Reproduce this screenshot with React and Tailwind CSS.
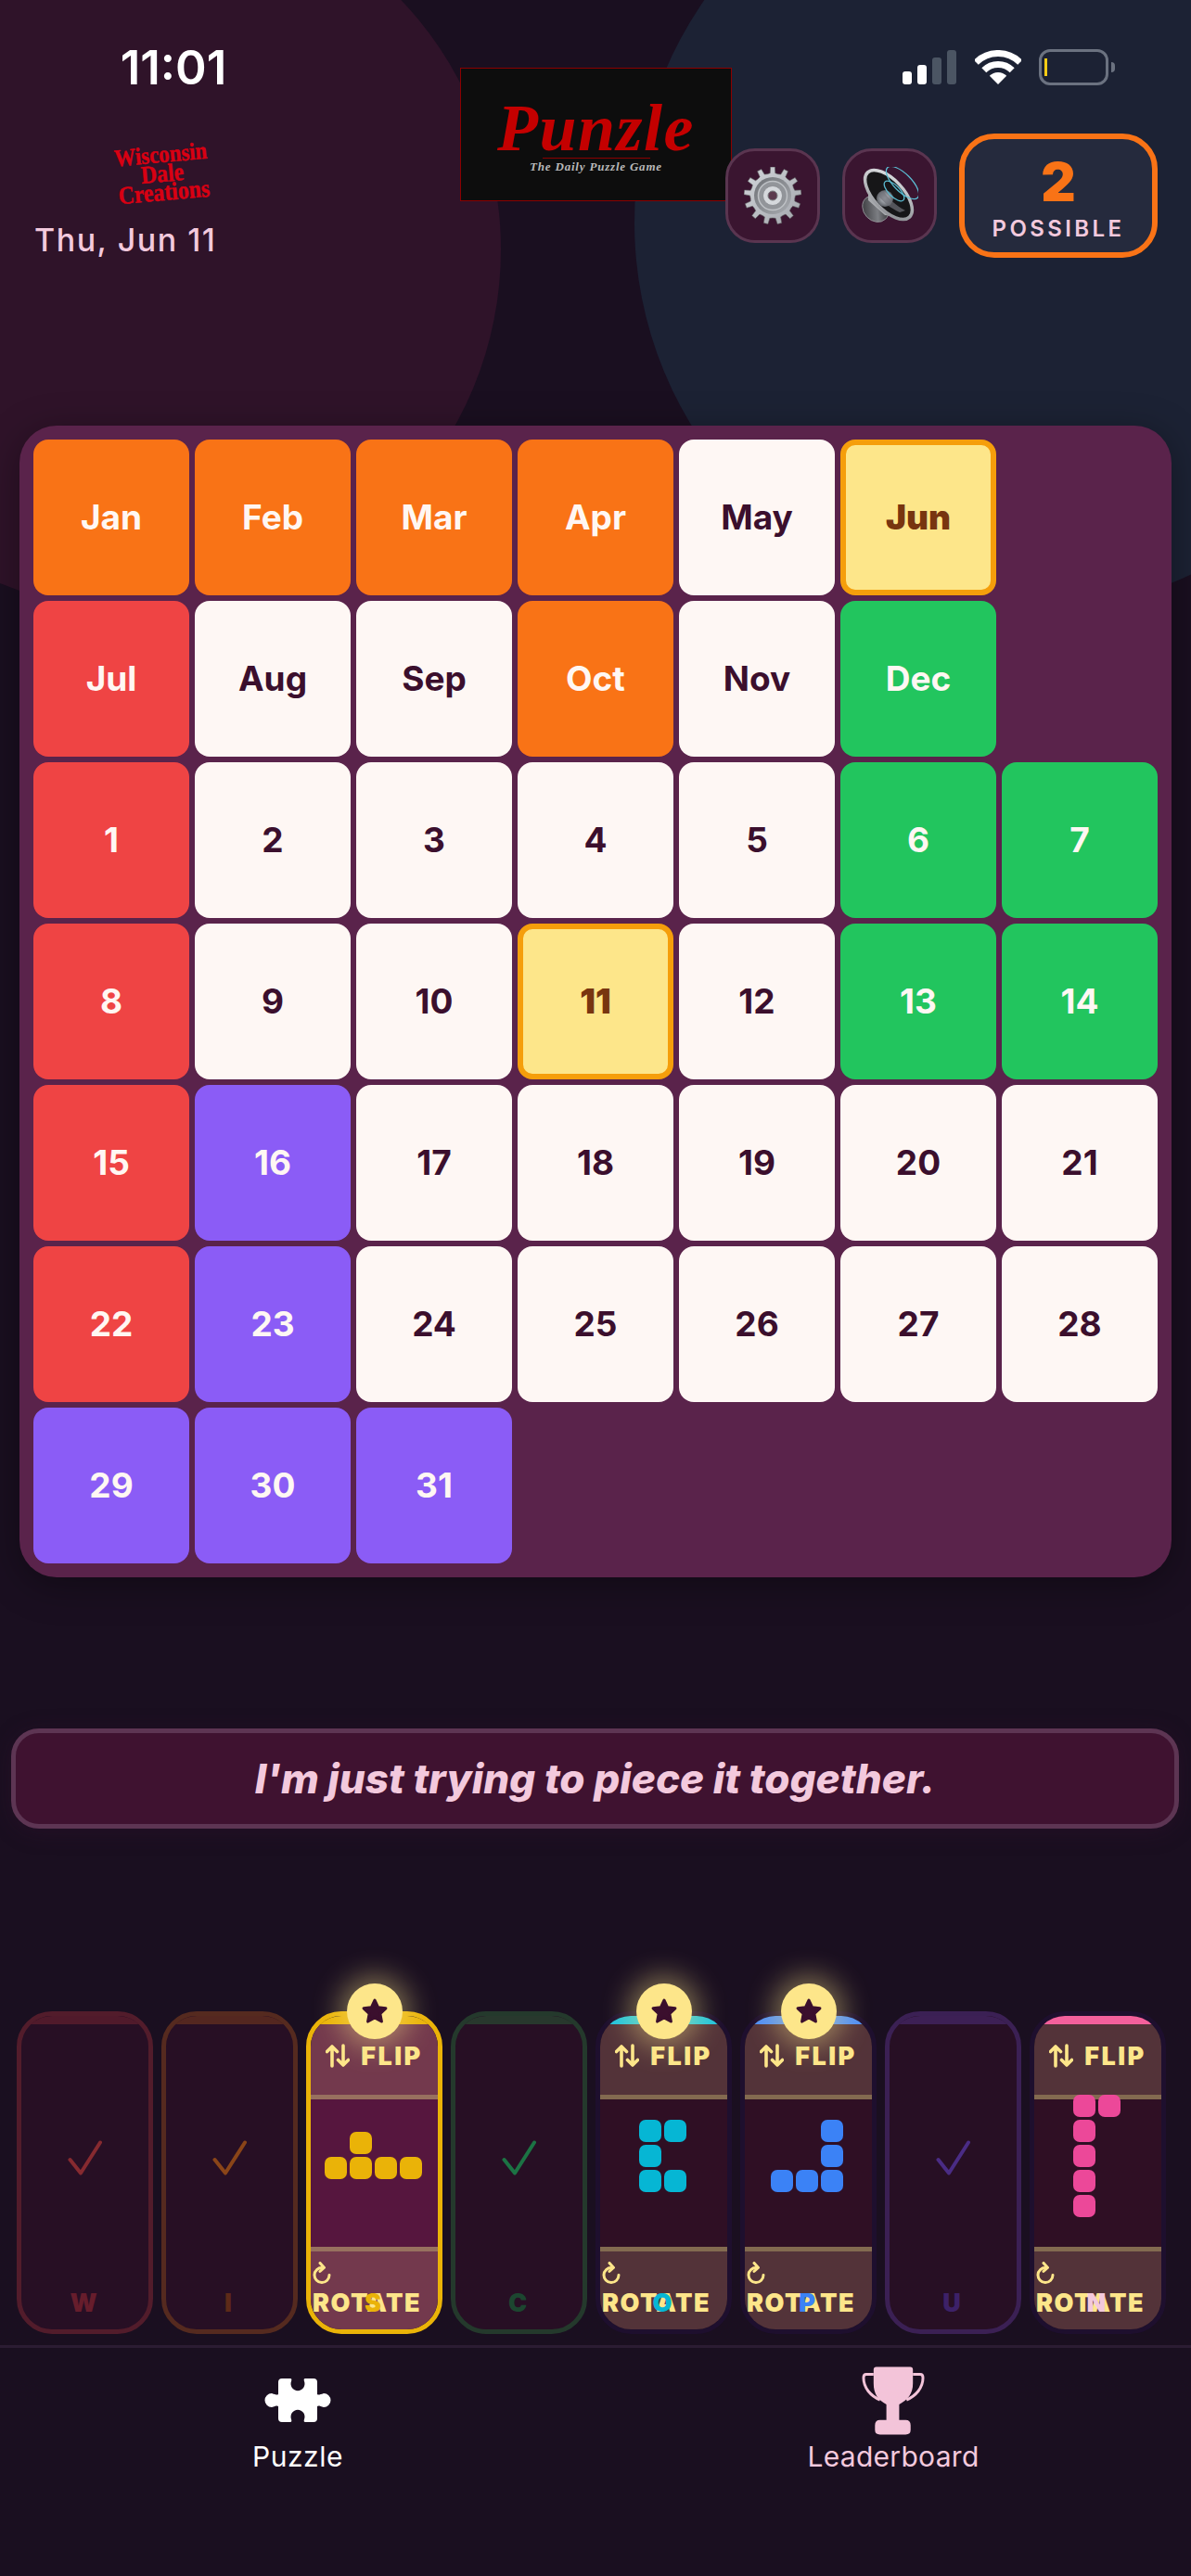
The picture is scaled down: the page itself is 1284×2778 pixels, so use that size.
import React from "react";

const cellStyles = {
  o: "bg-[#f97316] text-[#fff7f3] font-bold",
  r: "bg-[#ef4444] text-[#fff7f3] font-bold",
  g: "bg-[#22c55e] text-[#fff7f3] font-bold",
  p: "bg-[#8b5cf6] text-[#fff7f3] font-bold",
  w: "bg-[#fef7f4] text-[#3b0f2d] font-bold",
  s: "bg-[#fde68a] text-[#78350f] border-[6px] border-[#f59e0b] font-black",
};

const rows = [
  [["Jan","o"],["Feb","o"],["Mar","o"],["Apr","o"],["May","w"],["Jun","s"],null],
  [["Jul","r"],["Aug","w"],["Sep","w"],["Oct","o"],["Nov","w"],["Dec","g"],null],
  [["1","r"],["2","w"],["3","w"],["4","w"],["5","w"],["6","g"],["7","g"]],
  [["8","r"],["9","w"],["10","w"],["11","s"],["12","w"],["13","g"],["14","g"]],
  [["15","r"],["16","p"],["17","w"],["18","w"],["19","w"],["20","w"],["21","w"]],
  [["22","r"],["23","p"],["24","w"],["25","w"],["26","w"],["27","w"],["28","w"]],
  [["29","p"],["30","p"],["31","p"],null,null,null,null],
];

const doneCards = {
  W: { border: "border-[#521c2b]", strip: "bg-[#501a2b]", letter: "text-[#661d2c]", check: "#862a30" },
  I: { border: "border-[#552a1f]", strip: "bg-[#542720]", letter: "text-[#5d2a18]", check: "#8a4518" },
  C: { border: "border-[#24392c]", strip: "bg-[#28382d]", letter: "text-[#1c4630]", check: "#1c7344" },
  U: { border: "border-[#3b2054]", strip: "bg-[#3d2055]", letter: "text-[#3d2168]", check: "#4a2c85" },
};

const liveCards = {
  S: {
    border: "border-[#eab308]", strip: "bg-[#eab308]", zone: "bg-[#73394d]", sep: "bg-[#98705f]", mid: "bg-[#56163e]",
    cell: "bg-[#eab308]", letter: "text-[#eab308]", star: true,
    shape: ["0100", "1111"],
  },
  O: {
    border: "border-[#1e0f2e]", strip: "bg-[#22c5dd]", zone: "bg-[#533339]", sep: "bg-[#836a50]", mid: "bg-[#2f0f24]",
    cell: "bg-[#06b6d4]", letter: "text-[#06b6d4]", star: true,
    shape: ["11", "10", "11"],
  },
  P: {
    border: "border-[#1e0f2e]", strip: "bg-[#4f8ff7]", zone: "bg-[#533339]", sep: "bg-[#836a50]", mid: "bg-[#2f0f24]",
    cell: "bg-[#3b82f6]", letter: "text-[#3b82f6]", star: true,
    shape: ["001", "001", "111"],
  },
  N: {
    border: "border-[#1e0f2e]", strip: "bg-[#f3609c]", zone: "bg-[#533339]", sep: "bg-[#836a50]", mid: "bg-[#2f0f24]",
    cell: "bg-[#ec4899]", letter: "text-[#f3c9dd]", star: false,
    shape: ["11", "10", "10", "10", "10"],
  },
};

const dock = ["W", "I", "S", "C", "O", "P", "U", "N"];

function FlipIcon() {
  return (
    <svg width="26" height="26" viewBox="0 0 26 26" fill="none" stroke="#fde68a" strokeWidth="3.6" strokeLinecap="round" strokeLinejoin="round">
      <path d="M7 24V3M1.5 8.5 7 3l5.500 5.500" />
      <path d="M19 2v21M13.500 17.500 19 23l5.500-5.500" />
    </svg>
  );
}

function RotateIcon() {
  return (
    <svg width="20" height="24" viewBox="0 0 20 24" fill="none" stroke="#fde68a" strokeWidth="3" strokeLinecap="round" strokeLinejoin="round" className="block">
      <path d="M10.500 6.500A8 8 0 1 0 18 14.500" />
      <path d="M8 1.500 12.500 6.500 8 10.500" />
    </svg>
  );
}

function LiveCard({ id }) {
  const c = liveCards[id];
  return (
    <div className={`relative w-[147px] h-[348px] shrink-0 rounded-[38px] border-[5px] ${c.border}`}>
      <div className="h-full rounded-[33px] overflow-hidden flex flex-col">
        <div className={`h-[9px] ${c.strip}`} />
        <div className={`h-[76px] pt-[21px] flex justify-center gap-[12px] ${c.zone}`}>
          <FlipIcon />
          <span className="text-[27px] leading-[27px] font-black tracking-[2.5px] text-[#fde68a]">FLIP</span>
        </div>
        <div className={`h-[5px] ${c.sep}`} />
        <div className={`h-[159px] ${c.mid}`} />
        <div className={`h-[5px] ${c.sep}`} />
        <div className={`flex-1 pt-[11px] pl-[2px] ${c.zone}`}>
          <RotateIcon />
          <div className="mt-[7px] text-[27px] leading-[27px] font-black tracking-[1.5px] text-[#fde68a] whitespace-nowrap">ROTATE</div>
        </div>
      </div>
      <div className="absolute left-0 right-0 top-0 h-[301px] flex items-center justify-center pr-[3px]">
        <div className="flex flex-col gap-[3px]">
          {c.shape.map((row, i) => (
            <div key={i} className="flex gap-[3px]">
              {row.split("").map((v, j) => (
                <div key={j} className={`w-[24px] h-[24px] rounded-[7px] ${v === "1" ? c.cell : ""}`} />
              ))}
            </div>
          ))}
        </div>
      </div>
      <div className={`absolute left-0 right-0 bottom-[15px] pr-[3px] text-center text-[27px] leading-[27px] font-black ${c.letter}`}>{id}</div>
      {c.star && (
        <div className="absolute left-[39px] top-[-35px] w-[60px] h-[60px] rounded-full bg-[#fde68a] shadow-[0_0_30px_8px_rgba(253,230,138,0.45)] flex items-center justify-center">
          <svg width="30" height="30" viewBox="0 0 24 24" fill="#3b0f2d" stroke="#3b0f2d" strokeWidth="2.500" strokeLinejoin="round">
            <path d="M12 2.500l2.900 6.200 6.600.8-4.900 4.600 1.300 6.700L12 17.500l-5.900 3.300 1.300-6.700-4.900-4.600 6.600-.8z" />
          </svg>
        </div>
      )}
    </div>
  );
}

function DoneCard({ id }) {
  const c = doneCards[id];
  return (
    <div className={`relative w-[147px] h-[348px] shrink-0 rounded-[38px] border-[5px] bg-[#270f24] ${c.border}`}>
      <div className="h-full rounded-[33px] overflow-hidden">
        <div className={`h-[9px] ${c.strip}`} />
      </div>
      <div className="absolute left-0 right-0 top-0 h-[306px] flex items-center justify-center">
        <svg width="38" height="38" viewBox="0 0 38 38" fill="none" stroke={c.check} strokeWidth="4" strokeLinecap="round" strokeLinejoin="round">
          <path d="M2.500 21 14 35.500 35 2.500" />
        </svg>
      </div>
      <div className={`absolute left-0 right-0 bottom-[15px] pr-[3px] text-center text-[27px] leading-[27px] font-black ${c.letter}`}>{id}</div>
    </div>
  );
}

function Gear() {
  const teeth = 13;
  const pts = [];
  for (let i = 0; i < teeth; i++) {
    const step = (Math.PI * 2) / teeth;
    const a = i * step - Math.PI / 2;
    [[-0.5, 24], [-0.24, 24.5], [-0.16, 31], [0.16, 31], [0.24, 24.5]].forEach(([d, r]) => {
      const t = a + d * step;
      pts.push(`${(31 + r * Math.cos(t)).toFixed(1)},${(31 + r * Math.sin(t)).toFixed(1)}`);
    });
  }
  return (
    <svg width="62" height="62" viewBox="0 0 62 62">
      <defs>
        <linearGradient id="gearBody" x1="0" y1="0" x2="1" y2="1">
          <stop offset="0" stopColor="#d3d6db" />
          <stop offset="1" stopColor="#a3a6ac" />
        </linearGradient>
        <linearGradient id="gearWell" x1="0" y1="0" x2="1" y2="1">
          <stop offset="0" stopColor="#6f7277" />
          <stop offset="1" stopColor="#a8abb0" />
        </linearGradient>
      </defs>
      <polygon points={pts.join(" ")} fill="url(#gearBody)" stroke="#5e5f62" strokeWidth="0.6" strokeLinejoin="round" />
      <circle cx="31" cy="31" r="20" fill="url(#gearWell)" />
      <circle cx="31" cy="31" r="15.500" fill="#92959a" stroke="#bfc2c6" strokeWidth="1.500" />
      <circle cx="31" cy="31" r="10.500" fill="#d5d8dc" stroke="#85888d" strokeWidth="0.8" />
      <circle cx="31" cy="31" r="5" fill="#5c3a4e" stroke="#77797d" strokeWidth="1" />
    </svg>
  );
}

function Speaker() {
  return (
    <svg width="62" height="62" viewBox="0 0 62 62" fill="none">
      <defs>
        <linearGradient id="spkBody" x1="0" y1="0" x2="1" y2="1">
          <stop offset="0" stopColor="#2a2a2d" />
          <stop offset="0.55" stopColor="#7c7e83" />
          <stop offset="1" stopColor="#151517" />
        </linearGradient>
        <linearGradient id="spkRim" x1="0" y1="0" x2="1" y2="1">
          <stop offset="0" stopColor="#e2e4e7" />
          <stop offset="1" stopColor="#85878c" />
        </linearGradient>
        <radialGradient id="spkDome">
          <stop offset="0" stopColor="#cfd3da" />
          <stop offset="1" stopColor="#5b5e64" />
        </radialGradient>
      </defs>
      <ellipse cx="16" cy="45" rx="13" ry="15.500" transform="rotate(-43 16 45)" fill="url(#spkBody)" stroke="#9a9ca0" strokeWidth="0.8" />
      <path d="M8 18 C14 34 22 44 42 54 L26 52 L8 36 Z" fill="#a9abaf" />
      <ellipse cx="30" cy="30" rx="33" ry="16" transform="rotate(47 30 30)" fill="#161618" stroke="url(#spkRim)" strokeWidth="3.500" />
      <ellipse cx="26" cy="34" rx="9" ry="9" fill="url(#spkDome)" />
      <path d="M18 30 C26 40 32 44 42 49 L48 47 C38 42 30 34 24 26 Z" fill="#6f7177" opacity="0.7" />
      <ellipse cx="45" cy="17" rx="23" ry="9.500" transform="rotate(45 45 17)" stroke="#5bbcd2" strokeWidth="1.300" />
      <ellipse cx="36" cy="26" rx="14" ry="6" transform="rotate(45 36 26)" stroke="#5bbcd2" strokeWidth="1.300" />
    </svg>
  );
}

function Wifi() {
  return (
    <svg width="50" height="37" viewBox="0 0 50 37" fill="none">
      <path d="M1.300 13.300A33.500 33.500 0 0 1 48.700 13.300" stroke="#fff" strokeWidth="7" />
      <path d="M9.800 21.800A21.500 21.500 0 0 1 40.200 21.800" stroke="#fff" strokeWidth="7" />
      <path d="M25 37 15.800 27.800A13 13 0 0 1 34.200 27.800Z" fill="#fff" />
    </svg>
  );
}

function PuzzleIcon() {
  return (
    <svg width="72" height="48" viewBox="0 0 72 48" fill="#fff">
      <path d="M19 0H28Q30 0 29 3A7.500 7.500 0 1 0 43 3Q42 0 44 0H53Q57 0 57 4V17C58 18 60 17.500 64 16A7.500 7.500 0 1 1 64 31C60 29.500 58 29 57 30V43Q57 47 53 47H44Q42 47 43 44A7.500 7.500 0 1 0 29 44Q30 47 28 47H19Q15 47 15 43V30C14 29 12 29.500 8 31A7.500 7.500 0 1 1 8 16C12 17.500 14 18 15 17V4Q15 0 19 0Z" />
    </svg>
  );
}

function TrophyIcon() {
  return (
    <svg width="68" height="74" viewBox="30 12 69 74" fill="none">
      <path d="M46 12H83Q86 12 86 15V30C86 42 80 48 71 53V70H78Q83.500 70 83.500 76V81Q83.500 86 78 86H50Q44.500 86 44.500 81V76Q44.500 70 50 70H57V53C48 48 43 42 43 30V15Q43 12 46 12Z" fill="#f3c4d9" />
      <path d="M43 20H35Q32 20 32 24C32 35 40 44 50 48" stroke="#f3c4d9" strokeWidth="3" />
      <path d="M86 20H94Q97 20 97 24C97 35 89 44 79 48" stroke="#f3c4d9" strokeWidth="3" />
    </svg>
  );
}

export default function App() {
  return (
    <div className="relative w-[1284px] h-[2778px] overflow-hidden bg-[#1a0f20] font-['Inter',sans-serif]">
      <div className="absolute left-[-240px] top-[-121px] w-[780px] h-[780px] rounded-full bg-[#2f1329]" />
      <div className="absolute left-[684px] top-[-180px] w-[840px] h-[840px] rounded-full bg-[#1c2234]" />

      <div className="relative">
        <header className="h-[459px] flex items-start">
          <div className="w-[496px] pl-[37px]">
            <div className="w-[300px] pt-[47px] text-center text-[51px] leading-[51px] font-semibold text-white">11:01</div>
            <div className="w-[276px] mt-[59px] h-[60px] flex flex-col items-center -rotate-[5deg] scale-x-[0.88] font-['Liberation_Serif',serif] font-bold text-[#d90012] [-webkit-text-stroke:0.5px_#d90012]">
              <div className="text-[26px] leading-[20px]">Wisconsin</div>
              <div className="text-[27px] leading-[20px]">Dale</div>
              <div className="text-[27px] leading-[20px]">Creations</div>
            </div>
            <div className="mt-[22px] text-[34px] leading-[40px] font-medium tracking-[1.5px] text-[#f3c9dd] whitespace-nowrap">Thu, Jun 11</div>
          </div>

          <div className="w-[293px] h-[144px] mt-[73px] border border-[#8b0000] bg-[#0d0d0d] flex flex-col items-center pt-[29px]">
            <div className="font-['Liberation_Serif',serif] font-bold italic text-[72px] leading-[70px] tracking-[1.5px] text-[#c40000]">Punzle</div>
            <div className="w-[116px] h-px bg-[#8b0000] -mt-[3px]" />
            <div className="mt-[2px] font-['Liberation_Serif',serif] italic font-bold text-[13px] leading-[14px] tracking-[0.8px] text-[#b8b8b8]">The Daily Puzzle Game</div>
          </div>

          <div className="-ml-[7px] pt-[53px]">
            <div className="w-[502px] h-[39px] flex items-center justify-end pr-[82px]">
              <div className="flex items-end gap-[6px] h-[37px]">
                <div className="w-[10px] h-[14px] rounded-[3px] bg-white" />
                <div className="w-[10px] h-[21px] rounded-[3px] bg-white" />
                <div className="w-[10px] h-[29px] rounded-[3px] bg-[#4b5563]" />
                <div className="w-[10px] h-[37px] rounded-[3px] bg-[#4b5563]" />
              </div>
              <div className="ml-[20px]"><Wifi /></div>
              <div className="ml-[19px] flex items-center gap-[3px]">
                <div className="w-[75px] h-[39px] rounded-[12px] border-[3px] border-[#6b7280] flex items-center pl-[3px]">
                  <div className="w-[3px] h-[19px] bg-[#facc15]" />
                </div>
                <div className="w-[4px] h-[11px] rounded-r-full bg-[#6b7280]" />
              </div>
            </div>
            <div className="mt-[52px] flex items-center gap-[24px]">
              <div className="w-[102px] h-[102px] rounded-[32px] border-[3px] border-[#5a3550] bg-[#3a1530] flex items-center justify-center"><Gear /></div>
              <div className="w-[102px] h-[102px] rounded-[32px] border-[3px] border-[#5a3550] bg-[#3a1530] flex items-center justify-center"><Speaker /></div>
              <div className="w-[214px] h-[134px] rounded-[38px] border-[6px] border-[#f97316] bg-[#252a3d] flex flex-col items-center pt-[20px]">
                <div className="text-[58px] leading-[52px] font-black text-[#f97316]">2</div>
                <div className="mt-[11px] text-[24px] leading-[28px] font-semibold tracking-[3.4px] text-[#f3c9dd]">POSSIBLE</div>
              </div>
            </div>
          </div>
        </header>

        <main className="ml-[21px] w-[1242px] p-[15px] rounded-[40px] bg-[#5a234b] shadow-[0_8px_40px_rgba(0,0,0,0.35)]">
          <div className="grid grid-cols-7 gap-[6px]">
            {rows.flat().map((c, i) =>
              c ? (
                <div key={i} className={`h-[168px] rounded-[16px] flex items-center justify-center text-[37px] ${cellStyles[c[1]]}`}>{c[0]}</div>
              ) : (
                <div key={i} className="h-[168px]" />
              )
            )}
          </div>
        </main>

        <div className="mt-[163px] ml-[12px] w-[1259px] h-[108px] rounded-[30px] border-[5px] border-[#5d3553] bg-[#3f1230] flex items-center justify-center shadow-[0_4px_24px_rgba(60,15,50,0.3)]">
          <span className="text-[44px] leading-[48px] font-extrabold italic text-[#f3c9dd]">I'm just trying to piece it together.</span>
        </div>

        <div className="mt-[197px] pl-[18px] flex gap-[9px]">
          {dock.map((id) => (liveCards[id] ? <LiveCard key={id} id={id} /> : <DoneCard key={id} id={id} />))}
        </div>

        <nav className="mt-[12px] border-t-[3px] border-[#2b1c33] pt-[20px] flex">
          <div className="w-1/2 flex flex-col items-center">
            <div className="h-[74px] flex items-center"><PuzzleIcon /></div>
            <div className="mt-[5px] text-[30px] leading-[36px] font-normal tracking-[0.5px] text-white">Puzzle</div>
          </div>
          <div className="w-1/2 flex flex-col items-center">
            <div className="h-[74px] flex items-center"><TrophyIcon /></div>
            <div className="mt-[5px] text-[30px] leading-[36px] font-normal tracking-[0.3px] text-[#f3c9dd]">Leaderboard</div>
          </div>
        </nav>
      </div>
    </div>
  );
}
